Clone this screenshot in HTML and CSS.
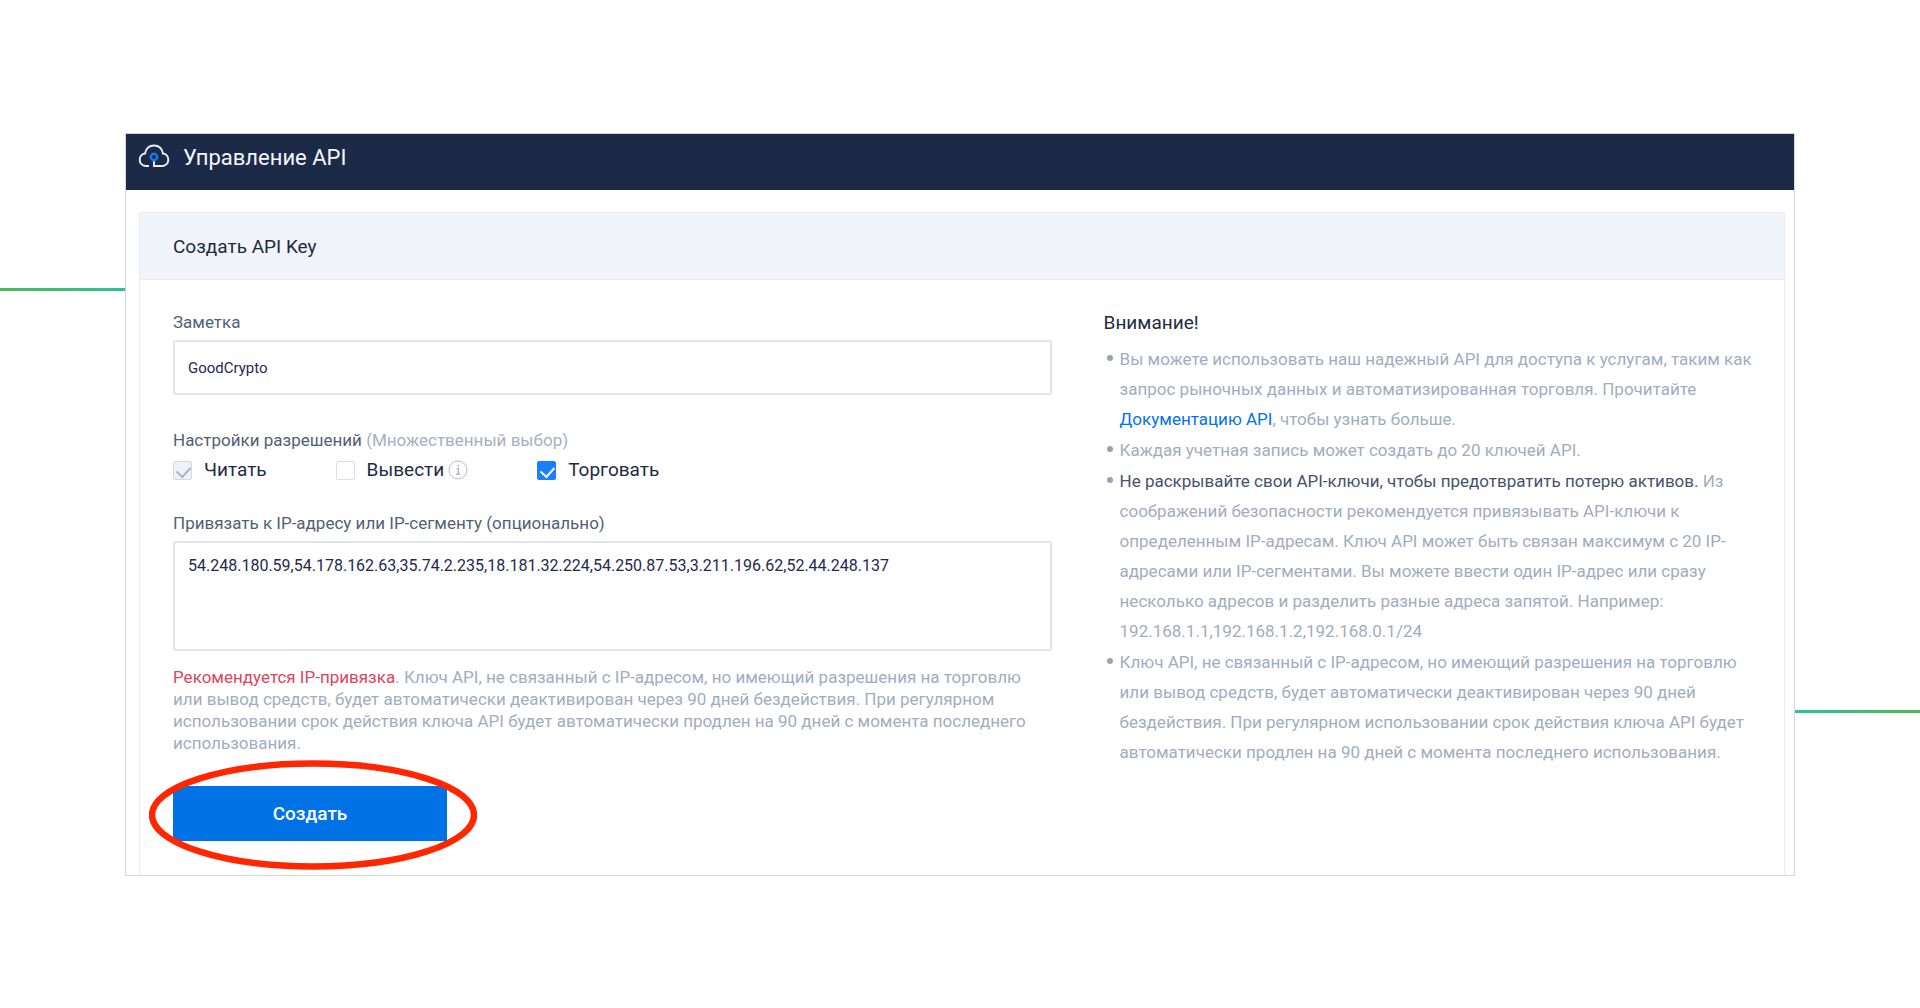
FILE: index.html
```html
<!DOCTYPE html>
<html lang="ru">
<head>
<meta charset="utf-8">
<meta name="viewport" content="width=device-width, initial-scale=1">
<title>Управление API</title>
<link rel="stylesheet" href="styles.css">
</head>
<body>
<div class="stage">
  <div class="rail rail-left"></div>
  <main class="window">
    <header class="topbar">
      <svg class="cloud" viewBox="0 0 32 28" aria-hidden="true">
        <path d="M11 22H7.500A6.300 6.300 0 0 1 7 9.500C8 4.500 11.500 1.500 16 1.500S24 4.500 25 9.500A6.300 6.300 0 0 1 24.500 22H16V15" fill="none" stroke="#e9edf5" stroke-width="2"/>
        <circle cx="16" cy="13" r="3.200" fill="#1c2a47" stroke="#1677e6" stroke-width="2.400"/>
      </svg>
      <h1 class="topbar-title">Управление API</h1>
    </header>
    <section class="panel">
      <h2 class="panel-title">Создать API Key</h2>
      <div class="panel-body">
        <form class="form">
          <label class="label" for="note">Заметка</label>
          <input class="field note" id="note" type="text" value="GoodCrypto">
          <fieldset class="permissions">
            <legend class="label">Настройки разрешений <span class="muted">(Множественный выбор)</span></legend>
            <div class="checks">
              <label class="check"><input class="box" type="checkbox" checked disabled>Читать</label>
              <label class="check"><input class="box" type="checkbox">Вывести
                <svg class="info" viewBox="0 0 20 20" aria-hidden="true">
                  <circle cx="10" cy="10" r="9" fill="none" stroke="#b3bccb"/>
                  <path d="M8.500 8.500H10.300V14M8 14.200H12.500" fill="none" stroke="#a5afc0" stroke-width="1.200"/>
                  <circle cx="10.200" cy="5.800" r="1" fill="#a5afc0"/>
                </svg>
              </label>
              <label class="check"><input class="box" type="checkbox" checked>Торговать</label>
            </div>
          </fieldset>
          <label class="label" for="ips">Привязать к IP-адресу или IP-сегменту (опционально)</label>
          <textarea class="field area" id="ips">54.248.180.59,54.178.162.63,35.74.2.235,18.181.32.224,54.250.87.53,3.211.196.62,52.44.248.137</textarea>
          <p class="hint"><span class="warn">Рекомендуется IP-привязка</span>. Ключ API, не связанный с IP-адресом, но имеющий разрешения на торговлю<br>или вывод средств, будет автоматически деактивирован через 90 дней бездействия. При регулярном<br>использовании срок действия ключа API будет автоматически продлен на 90 дней с момента последнего<br>использования.</p>
          <div class="submit">
            <button class="button" type="button">Создать</button>
            <svg class="ring" viewBox="0 0 328 110" aria-hidden="true"><ellipse cx="164" cy="55" rx="161" ry="51.500" fill="none" stroke="#ff2600" stroke-width="6.500"/></svg>
          </div>
        </form>
        <aside class="notes">
          <h3 class="notes-title">Внимание!</h3>
          <ul class="notes-list">
            <li>Вы можете использовать наш надежный API для доступа к услугам, таким как<br>запрос рыночных данных и автоматизированная торговля. Прочитайте<br><a class="link" href="#">Документацию API</a>, чтобы узнать больше.</li>
            <li>Каждая учетная запись может создать до 20 ключей API.</li>
            <li><strong class="strong">Не раскрывайте свои API-ключи, чтобы предотвратить потерю активов.</strong> Из<br>соображений безопасности рекомендуется привязывать API-ключи к<br>определенным IP-адресам. Ключ API может быть связан максимум с 20 IP-<br>адресами или IP-сегментами. Вы можете ввести один IP-адрес или сразу<br>несколько адресов и разделить разные адреса запятой. Например:<br>192.168.1.1,192.168.1.2,192.168.0.1/24</li>
            <li>Ключ API, не связанный с IP-адресом, но имеющий разрешения на торговлю<br>или вывод средств, будет автоматически деактивирован через 90 дней<br>бездействия. При регулярном использовании срок действия ключа API будет<br>автоматически продлен на 90 дней с момента последнего использования.</li>
          </ul>
        </aside>
      </div>
    </section>
  </main>
  <div class="rail rail-right"></div>
</div>
</body>
</html>
```

FILE: styles.css
```css
* { box-sizing: border-box; }

body {
  margin: 0;
  background: #fff;
  color: #1e2b3f;
  font-family: Roboto, "Liberation Sans", sans-serif;
  font-size: 16px;
}

h1, h2, h3, p, ul { margin: 0; font-weight: 400; }

.stage {
  display: grid;
  grid-template-columns: 125fr 1670fr 125fr;
  align-items: start;
  padding: 133px 0;
}

.rail { height: 3px; }
.rail-left { margin-top: 155px; background: linear-gradient(90deg, #4cb955, #2fc298); }
.rail-right { margin-top: 577px; background: linear-gradient(90deg, #2fc298, #4cb955); }

.window { border: 1px solid #d5d7da; }

.topbar {
  display: flex;
  align-items: center;
  gap: 13px;
  height: 56px;
  padding: 0 12px 8px;
  background: #1c2a47;
  color: #f4f6fa;
}
.cloud { width: 32px; height: 28px; }
.topbar-title { font-size: 22px; line-height: 28px; }

.panel {
  margin: 22px 9px 0 13px;
  border: 1px solid #e9edf4;
  border-bottom: 0;
}
.panel-title {
  padding: 20px 33px 18px;
  border-bottom: 1px solid #e6ebf2;
  background: #f1f4fa;
  font-size: 19px;
  line-height: 28px;
}
.panel-body {
  display: grid;
  grid-template-columns: 878fr 657fr;
  gap: 52px;
  padding: 32px 23px 0 33px;
}

.label {
  display: block;
  padding: 0;
  color: #525f75;
  font-size: 17px;
  line-height: 20px;
}
.muted { color: #a5b0c2; }

.field {
  display: block;
  width: 100%;
  height: 55px;
  margin-top: 8px;
  padding: 0 13px;
  border: 2px solid #e3e4e6;
  border-radius: 3px;
  background: #fff;
  color: #25294f;
  font: 16px/20px Roboto, "Liberation Sans", sans-serif;
}
.note { font-size: 15px; }
.area { height: 110px; padding: 13px; resize: none; }

.permissions { margin: 35px 0 31px; padding: 0; border: 0; }
.checks { display: flex; margin-top: 8px; }
.check {
  display: flex;
  align-items: center;
  margin-right: 69px;
  font-size: 19px;
  line-height: 24px;
}
.box {
  position: relative;
  width: 19px;
  height: 19px;
  margin: 0 12px 0 0;
  border: 1px solid #d8dee8;
  border-radius: 2px;
  background: #fff;
  appearance: none;
}
.box:checked { border-color: #1a80ff; background: #1a80ff; }
.box:disabled { border-color: #d3dae5; background: #eff3f9; }
.box:checked::after {
  content: "";
  position: absolute;
  top: 2px;
  left: 5px;
  width: 7px;
  height: 11px;
  border: solid #fff;
  border-width: 0 2px 2px 0;
  transform: rotate(42deg);
}
.box:disabled::after { border-color: #a9b4c6; }
.info { width: 20px; height: 20px; margin-left: 4px; }

.hint {
  margin-top: 15px;
  color: #a1adc0;
  font-size: 17px;
  line-height: 22px;
}
.warn { color: #dc4560; }

.submit { position: relative; width: 274px; margin: 32px 0 34px; }
.button {
  display: block;
  width: 100%;
  height: 55px;
  border: 0;
  background: #0072e6;
  color: #fff;
  font: 500 19px/24px Roboto, "Liberation Sans", sans-serif;
}
.ring { position: absolute; top: -26px; left: -24px; width: 328px; height: 110px; }

.notes-title { font-size: 19px; line-height: 22px; }
.notes-list {
  display: grid;
  gap: 1px;
  padding: 0;
  margin-top: 10px;
  color: #a1adc0;
  font-size: 17px;
  line-height: 30px;
  list-style: none;
}
.notes-list li { position: relative; padding-left: 16px; }
.notes-list li::before {
  content: "";
  position: absolute;
  top: 11px;
  left: 3px;
  width: 6px;
  height: 6px;
  border-radius: 50%;
  background: #97a4b8;
}
.link { color: #0072f5; text-decoration: none; }
.strong { color: #46536a; font-weight: 400; }
```
